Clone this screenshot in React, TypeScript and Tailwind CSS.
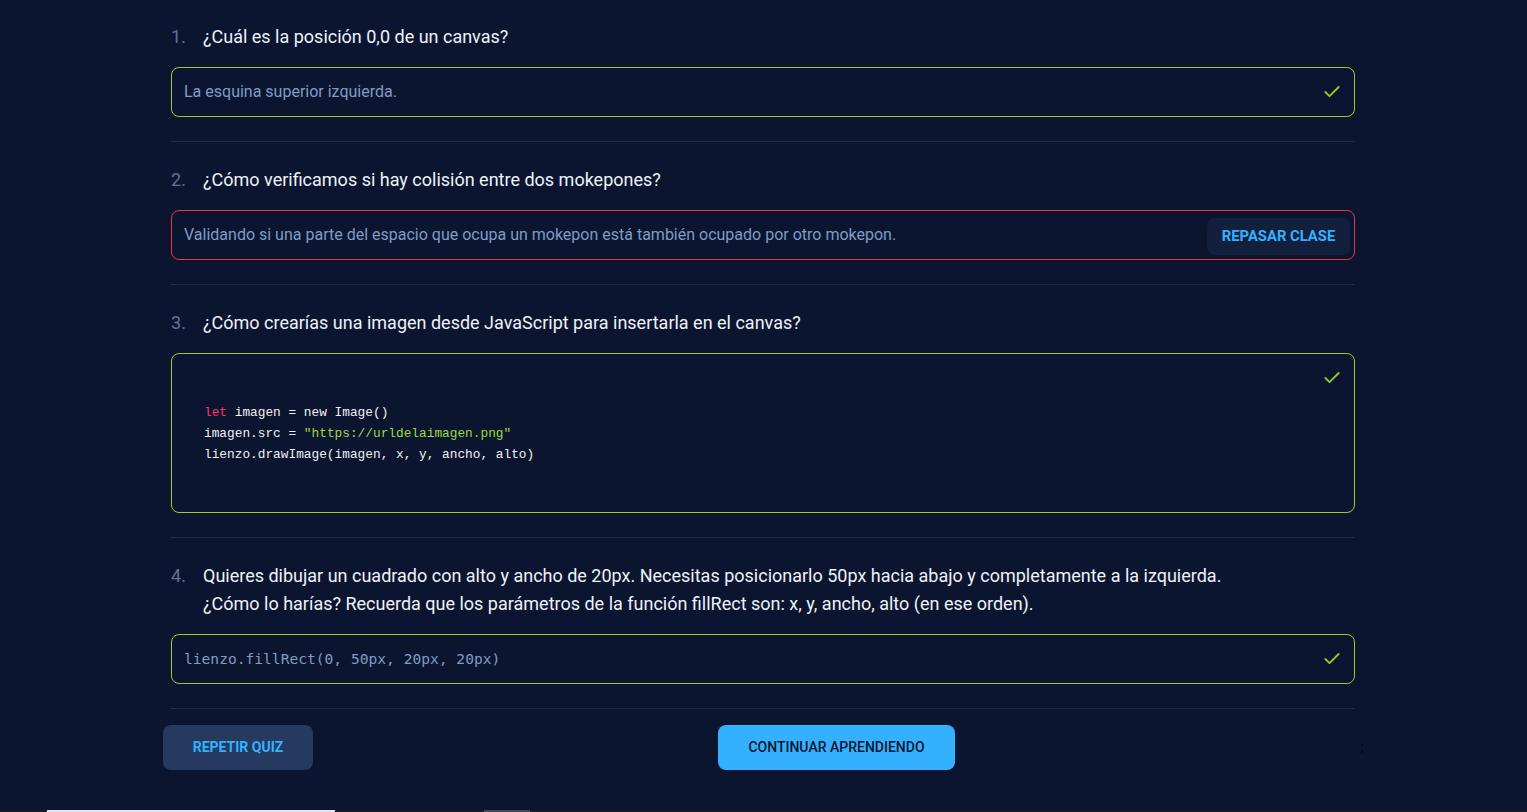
import { Check } from "lucide-react";

type Item = {
  n: number;
  q: string[];
  status: "ok" | "bad";
  kind: "text" | "code" | "mono";
  answer?: string;
};

const items: Item[] = [
  { n: 1, q: ["¿Cuál es la posición 0,0 de un canvas?"], status: "ok", kind: "text", answer: "La esquina superior izquierda." },
  {
    n: 2,
    q: ["¿Cómo verificamos si hay colisión entre dos mokepones?"],
    status: "bad",
    kind: "text",
    answer: "Validando si una parte del espacio que ocupa un mokepon está también ocupado por otro mokepon.",
  },
  { n: 3, q: ["¿Cómo crearías una imagen desde JavaScript para insertarla en el canvas?"], status: "ok", kind: "code" },
  {
    n: 4,
    q: [
      "Quieres dibujar un cuadrado con alto y ancho de 20px. Necesitas posicionarlo 50px hacia abajo y completamente a la izquierda.",
      "¿Cómo lo harías? Recuerda que los parámetros de la función fillRect son: x, y, ancho, alto (en ese orden).",
    ],
    status: "ok",
    kind: "mono",
    answer: "lienzo.fillRect(0, 50px, 20px, 20px)",
  },
];

export default function App() {
  return (
    <div className="flex h-[812px] flex-col overflow-hidden bg-[#0c1530] font-['Roboto',sans-serif]">
      <main className="flex-1 pl-[163px] pr-[164px]">
        <div className="px-2 pt-[23px]">
          {items.map((it) => (
            <Question key={it.n} item={it} />
          ))}
        </div>
        <div className="mt-[16px] flex items-center justify-between">
          <button className="h-[45px] w-[150px] rounded-lg bg-[#243a5e] text-[14px] font-bold uppercase text-[#33b1ff]">
            Repetir quiz
          </button>
          <button className="h-[45px] w-[237px] rounded-lg bg-[#33b1ff] text-[14px] font-medium uppercase text-[#0c1530]">
            Continuar aprendiendo
          </button>
          <span className="flex w-[3px] flex-col items-center gap-[4px] pt-[2px]">
            <span className="h-[2px] w-[2px] bg-[#050a18]" />
            <span className="h-[3px] w-[2px] bg-[#050a18]" />
          </span>
        </div>
      </main>
      <div className="relative h-[2px] bg-[#1c1c1c]">
        <div className="absolute left-[47px] top-0 h-[2px] w-[288px] bg-[#e5e5e5]" />
        <div className="absolute left-[484px] top-0 h-[2px] w-[46px] bg-[#4a4a4a]" />
      </div>
    </div>
  );
}

function Question({ item }: { item: Item }) {
  const ok = item.status === "ok";
  return (
    <section className="border-b border-[#1f2b48] pb-[24px] pt-[24px] first:pt-0">
      <div className="flex text-[18px] leading-[28px]">
        <span className="w-8 shrink-0 text-[#5f7395]">{item.n}.</span>
        <div className="text-[#eef2f8]">
          {item.q.map((l) => (
            <p key={l}>{l}</p>
          ))}
        </div>
      </div>
      <div
        className={
          "mt-[16px] flex items-start justify-between rounded-lg border " +
          (ok ? "border-[#97cc2c] py-[12px] pl-[12px] pr-[10px]" : "border-[#e53a3a] pb-[4px] pl-[12px] pr-[4px] pt-[7px]")
        }
      >
        {item.kind === "code" ? (
          <pre className="px-[20px] pb-[35px] pt-[36px] font-['Liberation_Mono',monospace] text-[12.8px] leading-[21px] text-[#f1f1f1]">
            <span className="text-[#ff2d6f]">let</span> imagen = new Image(){"\n"}
            imagen.src = <span className="text-[#9ddb3a]">"https://urldelaimagen.png"</span>
            {"\n"}lienzo.drawImage(imagen, x, y, ancho, alto)
          </pre>
        ) : item.kind === "mono" ? (
          <span className="font-['DejaVu_Sans_Mono',monospace] text-[14.6px] leading-[24px] text-[#7f9cc4]">
            {item.answer}
          </span>
        ) : (
          <span className={"text-[16px] leading-[24px] text-[#7f9cc4] " + (ok ? "" : "pt-[5px]")}>
            {item.answer}
          </span>
        )}
        {ok ? (
          <span className="flex h-6 w-6 items-center justify-center">
            <Check className="h-5 w-5 text-[#8fcb2f]" strokeWidth={2.2} />
          </span>
        ) : (
          <button className="h-[37px] w-[143px] rounded-lg bg-[#13203d] text-[14.8px] font-bold uppercase text-[#33b1ff]">
            Repasar clase
          </button>
        )}
      </div>
    </section>
  );
}
